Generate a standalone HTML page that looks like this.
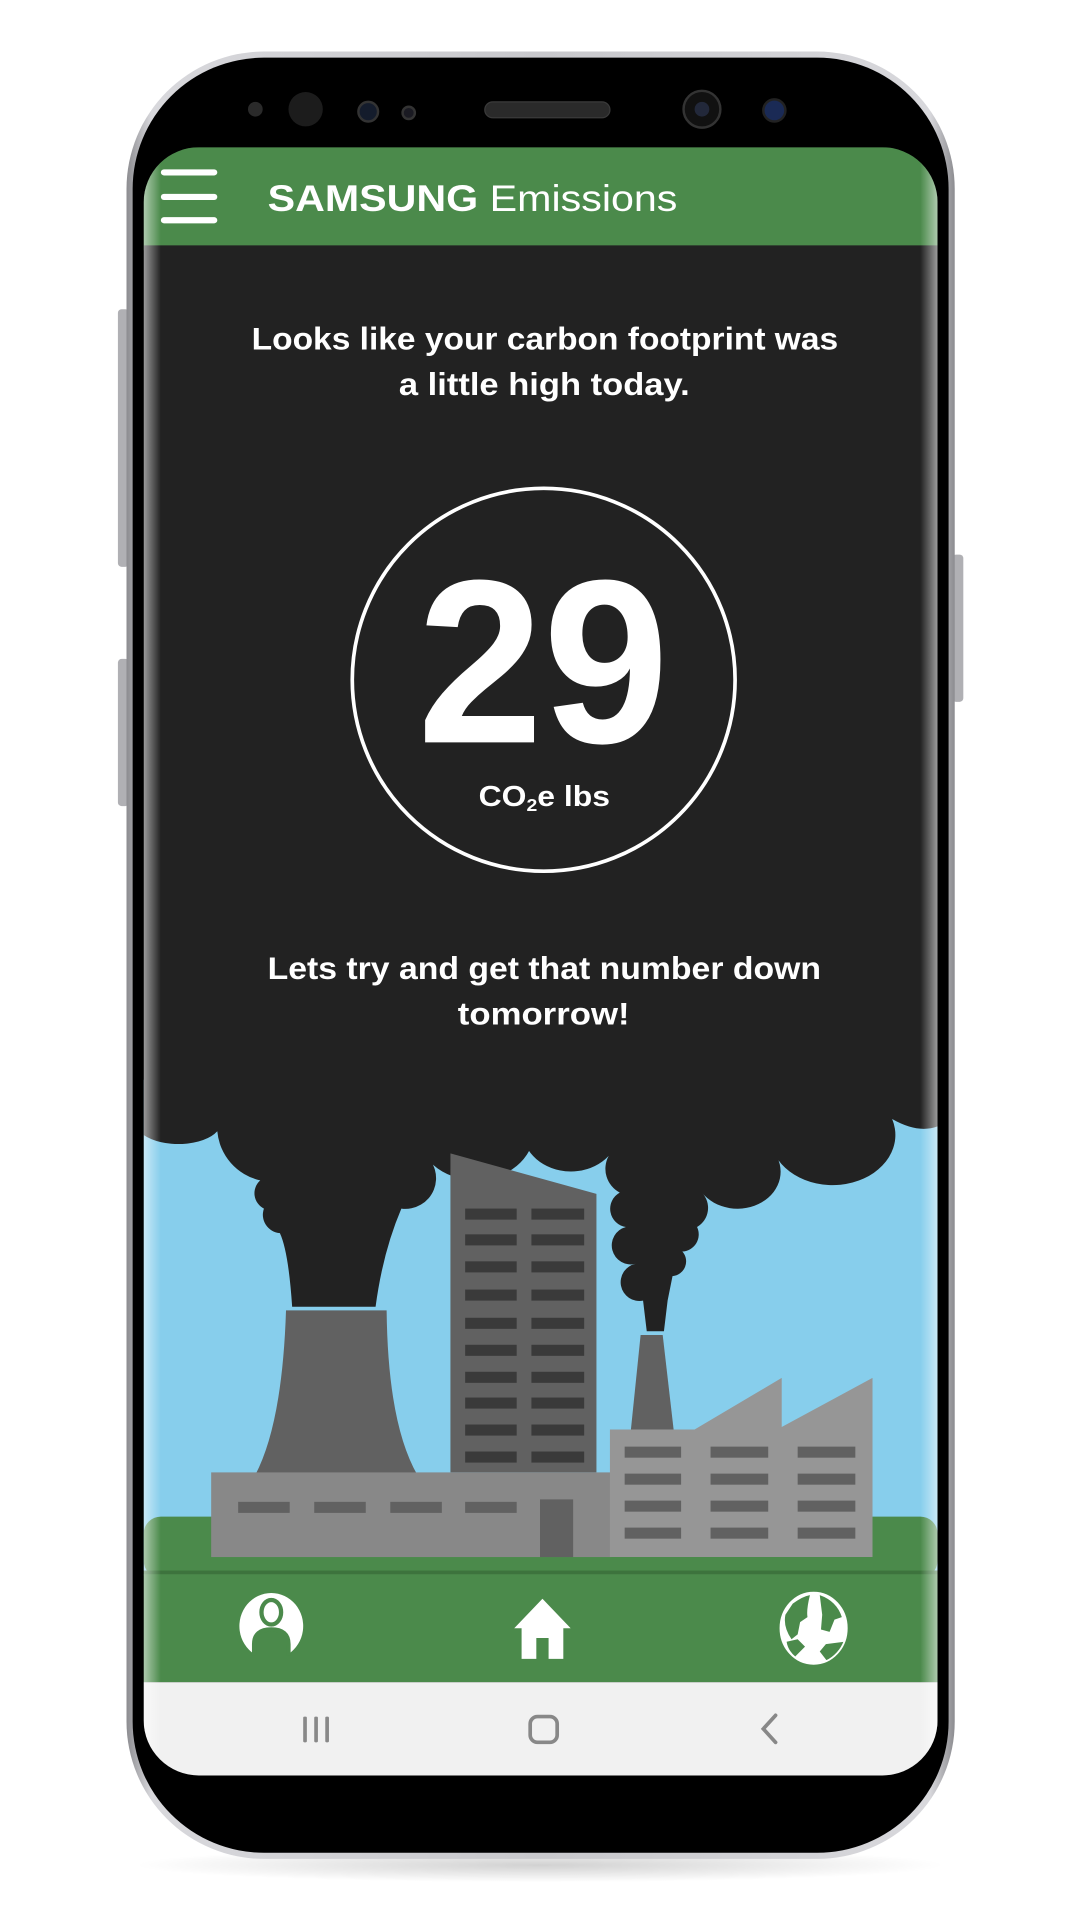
<!DOCTYPE html>
<html><head><meta charset="utf-8"><style>
html,body{margin:0;padding:0;background:#fff;width:1080px;height:1920px;overflow:hidden}
svg{display:block}
text{font-family:"Liberation Sans",sans-serif;fill:#fff;font-weight:bold}
</style></head><body>
<svg width="1080" height="1920" viewBox="0 0 880 1564.8" xmlns="http://www.w3.org/2000/svg">
<defs>
<linearGradient id="sil" x1="0" y1="0" x2="1" y2="0">
<stop offset="0" stop-color="#8c8c90"/><stop offset="0.03" stop-color="#d8d8dc"/><stop offset="0.5" stop-color="#c8c8cc"/><stop offset="0.97" stop-color="#d8d8dc"/><stop offset="1" stop-color="#8c8c90"/>
</linearGradient>
<linearGradient id="edgeL" x1="0" y1="0" x2="1" y2="0"><stop offset="0" stop-color="#fff" stop-opacity="0.55"/><stop offset="1" stop-color="#fff" stop-opacity="0"/></linearGradient>
<linearGradient id="edgeR" x1="1" y1="0" x2="0" y2="0"><stop offset="0" stop-color="#fff" stop-opacity="0.55"/><stop offset="1" stop-color="#fff" stop-opacity="0"/></linearGradient>
<radialGradient id="shad" cx="0.5" cy="0.5" r="0.5"><stop offset="0" stop-color="#000" stop-opacity="0.18"/><stop offset="1" stop-color="#000" stop-opacity="0"/></radialGradient>
<clipPath id="scr"><rect x="117" y="120" width="647" height="1327" rx="45"/></clipPath>
</defs>
<ellipse cx="440" cy="1520" rx="330" ry="14" fill="url(#shad)"/>
<!-- buttons -->
<rect x="96" y="252" width="9" height="210" rx="3" fill="#b0b0b4"/>
<rect x="96" y="537" width="9" height="120" rx="3" fill="#b0b0b4"/>
<rect x="776" y="452" width="9" height="120" rx="3" fill="#b0b0b4"/>
<rect x="103" y="42" width="675" height="1473" rx="112" fill="url(#sil)"/>
<rect x="108" y="47" width="665" height="1463" rx="107" fill="#000"/>
<!-- sensors -->
<circle cx="208" cy="89" r="6" fill="#2a2a2a"/>
<circle cx="249" cy="89" r="14" fill="#1c1c1c"/>
<circle cx="300" cy="91" r="8" fill="#141c2c" stroke="#333" stroke-width="2"/>
<circle cx="333" cy="92" r="5" fill="#1a1a22" stroke="#333" stroke-width="2"/>
<rect x="395" y="83" width="102" height="13" rx="6.5" fill="#2a2a2a" stroke="#3a3a3a"/>
<circle cx="572" cy="89" r="15" fill="#111" stroke="#333" stroke-width="2"/>
<circle cx="572" cy="89" r="6" fill="#22283a"/>
<circle cx="631" cy="90" r="9" fill="#1a2a55" stroke="#222" stroke-width="2"/>
<g clip-path="url(#scr)">
<rect x="117" y="120" width="647" height="1327" fill="#222"/>
<rect x="117" y="120" width="647" height="84" fill="#4b8a4b"/>
<!-- sky -->
<rect x="117" y="880" width="647" height="400" fill="#87ceec"/>
<!-- clouds -->
<path fill="#222" d="M117,200 H764 V918 Q748,924 727,912 A50,40 0 0 1 630,938 A35,30 0 0 1 572,972 A18,18 0 0 1 568,1000 A14,14 0 0 1 556,1020 A12,12 0 0 1 548,1040 L544,1060 L541,1085 L527,1085 L524,1060 A12,12 0 0 1 518,1030 A14,14 0 0 1 510,1000 A15,15 0 0 1 505,972 A22,22 0 0 1 496,942 A40,35 0 0 1 430,903 A45,38 0 0 1 345,940 A25,25 0 0 1 327,985 Q312,1020 306,1065 L238,1065 Q235,1020 228,1005 A15,15 0 0 1 215,985 A14,14 0 0 1 212,962 A45,45 0 0 1 177,922 A35,18 0 0 1 117,925 Z"/>
<!-- ground -->
<rect x="117" y="1236" width="647" height="50" rx="14" fill="#4b8a4b"/>
<!-- tall building -->
<path d="M367,940 L486,973 L486,1200 L367,1200 Z" fill="#616161"/>
<g fill="#3a3a3a">
<rect x="379" y="985" width="42" height="9"/><rect x="433" y="985" width="43" height="9"/>
<rect x="379" y="1006" width="42" height="9"/><rect x="433" y="1006" width="43" height="9"/>
<rect x="379" y="1028" width="42" height="9"/><rect x="433" y="1028" width="43" height="9"/>
<rect x="379" y="1051" width="42" height="9"/><rect x="433" y="1051" width="43" height="9"/>
<rect x="379" y="1074" width="42" height="9"/><rect x="433" y="1074" width="43" height="9"/>
<rect x="379" y="1096" width="42" height="9"/><rect x="433" y="1096" width="43" height="9"/>
<rect x="379" y="1118" width="42" height="9"/><rect x="433" y="1118" width="43" height="9"/>
<rect x="379" y="1139" width="42" height="9"/><rect x="433" y="1139" width="43" height="9"/>
<rect x="379" y="1161" width="42" height="9"/><rect x="433" y="1161" width="43" height="9"/>
<rect x="379" y="1183" width="42" height="9"/><rect x="433" y="1183" width="43" height="9"/>
</g>
<!-- cooling tower -->
<path d="M233,1068 L315,1068 Q316,1160 340,1202 L208,1202 Q230,1160 233,1068 Z" fill="#616161"/>
<!-- chimney -->
<path d="M522,1088 L540,1088 L549,1166 L514,1166 Z" fill="#616161"/>
<!-- low building -->
<rect x="172" y="1200" width="326" height="69" fill="#888"/>
<g fill="#616161">
<rect x="194" y="1224" width="42" height="9"/><rect x="256" y="1224" width="42" height="9"/>
<rect x="318" y="1224" width="42" height="9"/><rect x="379" y="1224" width="42" height="9"/>
<rect x="440" y="1222" width="27" height="47"/>
</g>
<!-- right factory -->
<path d="M497,1165 L566,1165 L637,1123 L637,1163 L711,1123 L711,1269 L497,1269 Z" fill="#969696"/>
<g fill="#616161">
<rect x="509" y="1179" width="46" height="9"/><rect x="579" y="1179" width="47" height="9"/><rect x="650" y="1179" width="47" height="9"/>
<rect x="509" y="1201" width="46" height="9"/><rect x="579" y="1201" width="47" height="9"/><rect x="650" y="1201" width="47" height="9"/>
<rect x="509" y="1223" width="46" height="9"/><rect x="579" y="1223" width="47" height="9"/><rect x="650" y="1223" width="47" height="9"/>
<rect x="509" y="1245" width="46" height="9"/><rect x="579" y="1245" width="47" height="9"/><rect x="650" y="1245" width="47" height="9"/>
</g>
<!-- bottom nav -->
<rect x="117" y="1280" width="647" height="4" fill="#3d733d"/>
<rect x="117" y="1283" width="647" height="88" fill="#4b8a4b"/>
<rect x="117" y="1371" width="647" height="80" fill="#f1f1f1"/>
<!-- person icon -->
<path d="M207,1348 A26,27 0 1 1 235,1348 L235,1340 Q235,1328 221,1328 Q207,1328 207,1340 Z" fill="#fff"/>
<ellipse cx="221" cy="1314" rx="8" ry="10" fill="none" stroke="#4b8a4b" stroke-width="3.5"/>
<path d="M207,1349 L207,1340 Q207,1328 221,1328 Q235,1328 235,1340 L235,1349" fill="none" stroke="#4b8a4b" stroke-width="3.5"/>
<!-- house -->
<path d="M442,1303 L465,1327 L459,1327 L459,1352 L447,1352 L447,1335 L437,1335 L437,1352 L425,1352 L425,1327 L419,1327 Z" fill="#fff"/>
<!-- globe -->
<ellipse cx="663" cy="1327" rx="27" ry="29" fill="#fff" stroke="#4b8a4b" stroke-width="0"/>
<path fill="#4b8a4b" d="M646,1307 Q654,1301 660,1300 Q657,1312 658,1318 L652,1322 L650,1332 L645,1336 Q638,1326 640,1316 Z M668,1300 Q682,1305 686,1318 L680,1320 L676,1330 L669,1328 L670,1316 Z M641,1338 L650,1336 L656,1342 L648,1350 Q642,1345 641,1338 Z M673,1340 L688,1338 Q684,1350 675,1355 L668,1346 Z"/>
<ellipse cx="663" cy="1327" rx="27" ry="29" fill="none" stroke="#fff" stroke-width="1.5"/>
<!-- system nav -->
<g fill="#888">
<rect x="247" y="1399" width="3" height="21" rx="1"/><rect x="256" y="1399" width="3" height="21" rx="1"/><rect x="265" y="1399" width="3" height="21" rx="1"/>
</g>
<rect x="432" y="1399" width="22" height="21" rx="6" fill="none" stroke="#888" stroke-width="3"/>
<path d="M632,1398 L622,1409 L632,1420" fill="none" stroke="#888" stroke-width="3" stroke-linecap="round"/>
<!-- curved edge highlights -->
<rect x="117" y="120" width="14" height="1327" fill="url(#edgeL)"/>
<rect x="750" y="120" width="14" height="1327" fill="url(#edgeR)"/>
</g>
<!-- hamburger -->
<g fill="#fff">
<rect x="131" y="138" width="46" height="5" rx="2.5"/>
<rect x="131" y="158" width="46" height="5" rx="2.5"/>
<rect x="131" y="177" width="46" height="5" rx="2.5"/>
</g>
<text x="218" y="172" font-size="30" textLength="334" lengthAdjust="spacingAndGlyphs">SAMSUNG<tspan font-weight="normal"> Emissions</tspan></text>
<text x="205" y="285" font-size="26" textLength="478" lengthAdjust="spacingAndGlyphs">Looks like your carbon footprint was</text>
<text x="325" y="322" font-size="26" textLength="237" lengthAdjust="spacingAndGlyphs">a little high today.</text>
<circle cx="443" cy="554" r="156" fill="none" stroke="#fff" stroke-width="3"/>
<text x="340" y="605" font-size="190" textLength="205" lengthAdjust="spacingAndGlyphs">29</text>
<text x="390" y="657" font-size="23" textLength="107" lengthAdjust="spacingAndGlyphs">CO<tspan font-size="14" dy="4">2</tspan><tspan dy="-4">e lbs</tspan></text>
<text x="218" y="798" font-size="26" textLength="451" lengthAdjust="spacingAndGlyphs">Lets try and get that number down</text>
<text x="373" y="835" font-size="26" textLength="140" lengthAdjust="spacingAndGlyphs">tomorrow!</text>
</svg>
</body></html>
